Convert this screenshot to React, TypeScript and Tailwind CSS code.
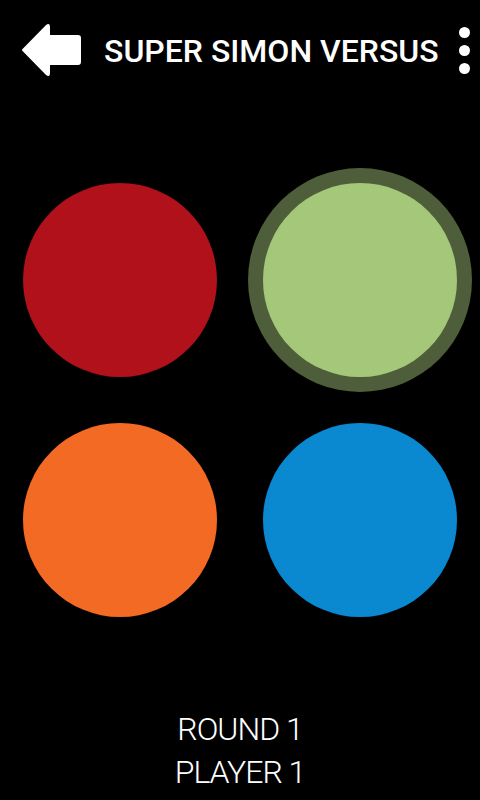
import React from "react";

export default function App() {
  return (
    <div className="w-[480px] h-[800px] bg-black flex flex-col overflow-hidden" style={{ fontFamily: "Roboto, 'Noto Sans', sans-serif" }}>
      <div className="h-[100px] flex items-center">
        <div className="w-[104px] h-full flex items-center pl-[21px]">
          <svg width="60" height="54" viewBox="0 0 60 54">
            <path
              d="M2 27 L26 2.5 Q28 1 28 4 L28 13 L57 13 Q59 13 59 15 L59 39 Q59 41 57 41 L28 41 L28 50 Q28 53 26 51.5 Z"
              fill="white"
              stroke="white"
              strokeWidth="2"
              strokeLinejoin="round"
            />
          </svg>
        </div>
        <div className="flex-1 text-white text-[32px] font-medium leading-none whitespace-nowrap pt-[1px]">
          SUPER SIMON VERSUS
        </div>
        <div className="w-[11px] mr-[10px] flex flex-col items-center gap-[7px] mb-[0px]">
          <div className="w-[11px] h-[11px] rounded-full bg-white" />
          <div className="w-[11px] h-[11px] rounded-full bg-white" />
          <div className="w-[11px] h-[11px] rounded-full bg-white" />
        </div>
      </div>
      <div className="h-[60px]" />
      <div className="grid grid-cols-2 grid-rows-[240px_240px]">
        <div className="flex items-center justify-center">
          <div className="w-[194px] h-[194px] rounded-full bg-[#b0111a]" />
        </div>
        <div className="flex items-center justify-center">
          <div className="w-[224px] h-[224px] rounded-full bg-[#4f5e3a] flex items-center justify-center">
            <div className="w-[194px] h-[194px] rounded-full bg-[#a5c77a]" />
          </div>
        </div>
        <div className="flex items-center justify-center">
          <div className="w-[194px] h-[194px] rounded-full bg-[#f36a24]" />
        </div>
        <div className="flex items-center justify-center">
          <div className="w-[194px] h-[194px] rounded-full bg-[#0a88d0]" />
        </div>
      </div>
      <div className="flex-1 flex flex-col items-center pt-[68px] text-white text-[32px] font-light leading-[43px] tracking-[-1px]">
        <div>ROUND 1</div>
        <div>PLAYER 1</div>
      </div>
    </div>
  );
}
